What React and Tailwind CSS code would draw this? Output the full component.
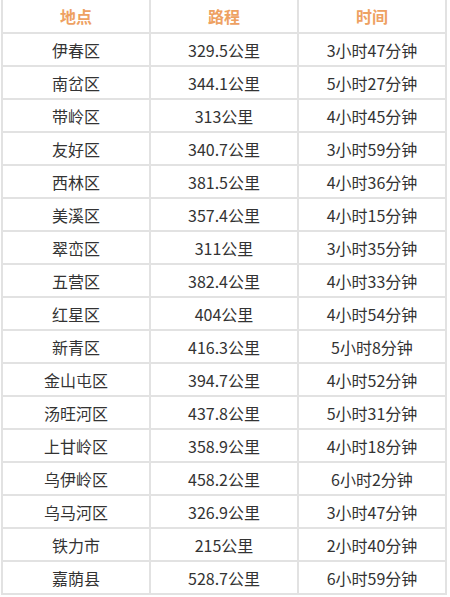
import React from "react";

const rows = [
  ["伊春区", "329.5公里", "3小时47分钟"],
  ["南岔区", "344.1公里", "5小时27分钟"],
  ["带岭区", "313公里", "4小时45分钟"],
  ["友好区", "340.7公里", "3小时59分钟"],
  ["西林区", "381.5公里", "4小时36分钟"],
  ["美溪区", "357.4公里", "4小时15分钟"],
  ["翠峦区", "311公里", "3小时35分钟"],
  ["五营区", "382.4公里", "4小时33分钟"],
  ["红星区", "404公里", "4小时54分钟"],
  ["新青区", "416.3公里", "5小时8分钟"],
  ["金山屯区", "394.7公里", "4小时52分钟"],
  ["汤旺河区", "437.8公里", "5小时31分钟"],
  ["上甘岭区", "358.9公里", "4小时18分钟"],
  ["乌伊岭区", "458.2公里", "6小时2分钟"],
  ["乌马河区", "326.9公里", "3小时47分钟"],
  ["铁力市", "215公里", "2小时40分钟"],
  ["嘉荫县", "528.7公里", "6小时59分钟"],
];

const App = () => {
  return (
    <div className="w-[450px] h-[597px] bg-white">
      <div
        className="ml-[1px] w-[446px] grid grid-cols-3 gap-[2px] p-[2px] pt-0 bg-[#e2e2e2] text-[16px] text-center"
        style={{ fontFamily: '"Noto Sans CJK SC", "Noto Sans", sans-serif' }}
      >
        {["地点", "路程", "时间"].map((h) => (
          <div
            key={h}
            className="bg-white h-[32px] flex items-center justify-center font-bold text-[#eea162]"
          >
            {h}
          </div>
        ))}
        {rows.map((r) =>
          r.map((c, i) => (
            <div
              key={r[0] + i}
              className="bg-white h-[31px] flex items-center justify-center text-[#333333]"
            >
              {c}
            </div>
          ))
        )}
      </div>
    </div>
  );
};

export default App;
